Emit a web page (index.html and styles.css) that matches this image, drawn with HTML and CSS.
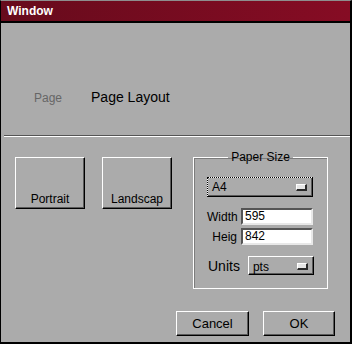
FILE: index.html
```html
<!DOCTYPE html>
<html>
<head>
<meta charset="utf-8">
<link rel="stylesheet" href="styles.css">
</head>
<body>
<div class="window">
  <div class="titlebar">Window</div>
  <div class="header">
    <span class="crumb">Page</span>
    <span class="title">Page Layout</span>
  </div>
  <div class="sep"></div>
  <div class="main">
    <div class="views">
      <button class="btn view">Portrait</button>
      <button class="btn view">Landscap</button>
    </div>
    <fieldset class="group">
      <legend class="legend">Paper Size</legend>
      <div class="select focus wide"><span class="sel-text">A4</span><span class="ind"></span></div>
      <div class="field first"><span class="lbl">Width</span><span class="input">595</span></div>
      <div class="field"><span class="lbl">Heig</span><span class="input">842</span></div>
      <div class="units"><span class="ulbl">Units</span><div class="select narrow"><span class="sel-text">pts</span><span class="ind"></span></div></div>
    </fieldset>
  </div>
  <div class="actions">
    <button class="btn act cancel">Cancel</button>
    <button class="btn act ok">OK</button>
  </div>
</div>
</body>
</html>
```
FILE: styles.css
```css
* { box-sizing: border-box; }
html, body { margin: 0; padding: 0; background: #ababab; }
body { font-family: "Liberation Sans", Arial, sans-serif; }

.window {
  width: 352px;
  height: 344px;
  background: #ababab;
  border-left: 1px solid #000;
  border-right: 2px solid #000;
  border-bottom: 2px solid #000;
  border-top: 1px solid #8e8e8e;
  display: flex;
  flex-direction: column;
}

.titlebar {
  height: 22px;
  background: linear-gradient(to right, #670b1c, #860c24);
  border-bottom: 2px solid #000;
  color: #fff;
  font-weight: bold;
  font-size: 12px;
  line-height: 20px;
  padding-left: 6px;
}

.header {
  height: 112px;
  padding: 66px 0 0 33px;
  display: flex;
  align-items: baseline;
  gap: 29px;
}
.crumb { font-size: 12px; color: #666; line-height: 16px; }
.title { font-size: 14px; color: #000; line-height: 16px; }

.sep {
  height: 2px;
  margin-left: 3px;
  border-top: 1px solid #555;
  border-bottom: 1px solid #fff;
}

.main {
  display: flex;
  align-items: flex-start;
  padding-left: 14px;
}

.views {
  display: flex;
  gap: 17px;
  margin-top: 20px;
}

.btn {
  background: #ababab;
  border: 1px solid;
  border-color: #fff #000 #000 #fff;
  box-shadow: inset -1px -1px 0 #5a5a5a;
  font-family: "Liberation Sans", Arial, sans-serif;
  color: #000;
  padding: 0;
  margin: 0;
}

.view {
  width: 70px;
  height: 52px;
  font-size: 12px;
  display: flex;
  align-items: flex-end;
  justify-content: center;
  padding-bottom: 2px;
  white-space: nowrap;
  overflow: hidden;
}

.group {
  margin: 14px 0 0 21px;
  width: 135px;
  padding: 14px 13px 13px 13px;
  border: 1px solid #fff;
  box-shadow: inset 1px 1px 0 #7c7c7c;
  min-width: 0;
}
.legend {
  margin: 0 auto;
  padding: 0 3px;
  font-size: 12px;
  line-height: 12px;
  color: #000;
}

.select {
  height: 20px;
  border: 1px solid;
  border-color: #fff #000 #000 #fff;
  box-shadow: inset -1px -1px 0 #5a5a5a;
  display: flex;
  align-items: center;
  justify-content: space-between;
  padding: 0 5px 0 4px;
  font-size: 12px;
  color: #000;
}
.select.focus {
  outline: 1px dotted #000;
  outline-offset: -1px;
}
.wide { width: 106px; }
.narrow { width: 68px; height: 19px; padding-top: 2px; }

.ind {
  width: 11px;
  height: 7px;
  background: #e6e6e6;
  border-top: 1px solid #fff;
  border-left: 1px solid #fff;
  border-right: 2px solid #2a2a2a;
  border-bottom: 2px solid #2a2a2a;
}

.field {
  display: flex;
  align-items: center;
  gap: 4px;
  margin-top: 3px;
}
.field.first { margin-top: 11px; }
.lbl {
  width: 30px;
  text-align: right;
  font-size: 12px;
  white-space: nowrap;
}
.input {
  width: 72px;
  height: 17px;
  background: #fff;
  border: 2px solid;
  border-color: #555 #e8e8e8 #e8e8e8 #555;
  font-size: 12px;
  line-height: 13px;
  padding-left: 2px;
}

.units {
  display: flex;
  align-items: center;
  gap: 8px;
  margin-top: 11px;
  padding-left: 1px;
}
.ulbl { font-size: 14px; }

.actions {
  margin-top: auto;
  display: flex;
  justify-content: flex-end;
  gap: 14px;
  padding: 0 15px 6px 0;
}
.act {
  height: 25px;
  font-size: 13px;
}
.cancel { width: 73px; }
.ok { width: 72px; }
```
